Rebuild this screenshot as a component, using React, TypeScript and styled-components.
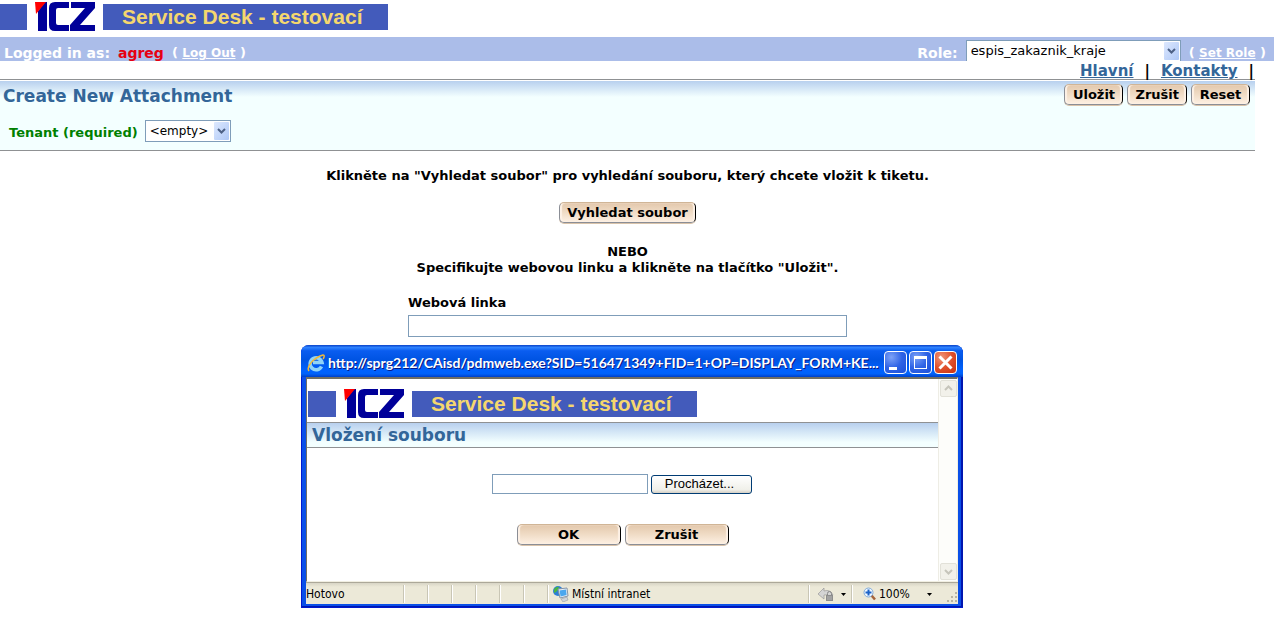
import React from "react";
import styled, { createGlobalStyle } from "styled-components";

const verdana = `"DejaVu Sans", Verdana, sans-serif`;
const tahoma = `"DejaVu Sans Condensed", "DejaVu Sans", Tahoma, sans-serif`;
const arial = `"Liberation Sans", Arial, sans-serif`;
const line = "#8f9193";

const GlobalStyle = createGlobalStyle`
  * { box-sizing: border-box; }
  body {
    margin: 0;
    background: #fff;
    color: #000;
    font: 13px/16px ${verdana};
  }
`;

const Page = styled.div`
  position: relative;
  min-height: 100vh;
`;

const Brand = styled.div`
  display: flex;
  align-items: center;
  gap: 8px;
  height: 30px;
`;

const BrandBlock = styled.div<{ $width: number }>`
  width: ${(p) => p.$width}px;
  height: 26px;
  background: #435bbb;
`;

const BrandTitle = styled.div`
  width: 285px;
  height: 26px;
  padding-left: 19px;
  background: #435bbb;
  color: #f5d76e;
  font: bold 21px/26px ${arial};
  white-space: nowrap;
`;

const TopBrand = styled.header`
  padding: 2px 0 5px;
`;

const LoginBar = styled.div`
  display: flex;
  justify-content: space-between;
  height: 24px;
  padding: 3px 8px 0 4px;
  overflow: hidden;
  background: #abbde9;
  color: #fff;
  font-weight: bold;
  font-size: 14px;
  line-height: 26px;
  white-space: nowrap;
`;

const BarGroup = styled.div`
  display: flex;
  gap: 8px;
`;

const User = styled.span`
  color: #e60012;
`;

const BarAction = styled.span`
  font-size: 13px;
  a {
    color: inherit;
    font-size: 12px;
  }
`;

const SelectBox = styled.span<{ $width: number }>`
  position: relative;
  display: inline-flex;
  width: ${(p) => p.$width}px;
  height: 22px;
  svg {
    position: absolute;
    top: 2px;
    right: 2px;
    pointer-events: none;
  }
`;

const SelectField = styled.select<{ $size: number }>`
  width: 100%;
  height: 22px;
  padding: 0 18px 0 4px;
  border: 1px solid #7f9db9;
  border-radius: 0;
  background: #fff;
  color: #000;
  appearance: none;
  font: ${(p) => p.$size}px/20px ${verdana};
`;

const Content = styled.div`
  margin-right: 19px;
`;

const Menu = styled.nav`
  display: flex;
  justify-content: flex-end;
  gap: 11px;
  height: 19px;
  padding-right: 1px;
  border-bottom: 1px solid ${line};
  font-weight: bold;
  font-size: 15px;
  line-height: 20px;
  a { color: #336699; }
`;

const FormHead = styled.section`
  margin-top: 1px;
  height: 70px;
  padding: 3px 5px 0 3px;
  border-bottom: 1px solid ${line};
  background: #f3ffff linear-gradient(#b8d0ee, #f3ffff) no-repeat 0 0 / 100% 16px;
`;

const HeadRow = styled.div`
  display: flex;
  justify-content: space-between;
`;

const Heading = styled.h1`
  margin: 0;
  color: #336699;
  font-weight: bold;
  font-size: 17px;
  line-height: 24px;
`;

const ButtonRow = styled.div`
  display: flex;
  justify-content: center;
  gap: 4px;
`;

const SkinButton = styled.button<{ $wide?: boolean }>`
  height: 21px;
  min-width: ${(p) => (p.$wide ? 104 : 59)}px;
  padding: 0 7px;
  border: 1px solid #8b8e96;
  border-top-color: #d0b596;
  border-right-color: #000;
  border-radius: 5px;
  background: linear-gradient(#e3c8ac, #f0dcc6 50%, #fdf0e3);
  box-shadow: inset 2px 0 1px #fdf1e6, inset -2px 0 1px #fdf1e6, 0 1px 0 #d9c3aa;
  color: #000;
  font: bold 13px/18px ${verdana};
  white-space: nowrap;
`;

const TenantRow = styled.div`
  display: flex;
  gap: 7px;
  margin-top: 12px;
  padding-left: 6px;
  label {
    color: #008000;
    font-weight: bold;
    line-height: 26px;
  }
`;

const Attach = styled.main`
  display: flex;
  flex-direction: column;
  align-items: center;
  padding-top: 17px;
  font-weight: bold;
  text-align: center;
`;

const Message = styled.p`
  margin: 0;
`;

const SearchRow = styled.div`
  padding: 18px 0 21px;
`;

const LinkField = styled.div`
  display: flex;
  flex-direction: column;
  gap: 4px;
  width: 439px;
  margin-top: 19px;
  text-align: left;
`;

const TextBox = styled.input<{ $width?: number; $height: number }>`
  width: ${(p) => (p.$width ? `${p.$width}px` : "100%")};
  height: ${(p) => p.$height}px;
  padding: 0 4px;
  border: 1px solid #7f9db9;
  background: #fff;
  font: 13px ${verdana};
`;

const Popup = styled.section`
  position: absolute;
  top: 345px;
  left: 301px;
  width: 662px;
  padding: 0 5px 4px;
  border-radius: 8px 8px 0 0;
  background: #0a4fe8;
  box-shadow: inset 1px -1px 0 #0019cf, inset -2px -2px 0 #0016b0;
`;

const TitleBar = styled.div`
  display: flex;
  align-items: center;
  gap: 3px;
  height: 32px;
  margin: 0 -5px;
  padding: 3px 6px 0 6px;
  border-radius: 8px 8px 0 0;
  background: linear-gradient(#0a42c8, #2f83ff 8%, #0a5df0 18%, #0054e3 45%, #0062ff 80%, #0062fa 90%, #0040c8);
`;

const TitleText = styled.h2`
  flex: 1;
  margin: 0;
  overflow: hidden;
  color: #fff;
  font: bold 14px/24px Lato, "Trebuchet MS", sans-serif;
  text-shadow: 1px 1px 0 #0a1883;
  white-space: nowrap;
`;

const CaptionButtons = styled.div`
  display: flex;
  gap: 2px;
`;

const CaptionButton = styled.button<{ $close?: boolean }>`
  display: flex;
  width: 23px;
  height: 23px;
  padding: 0;
  border: 1px solid #fff;
  border-radius: 4px;
  background: ${(p) =>
    p.$close
      ? "radial-gradient(circle at 30% 25%, #ef9579, #e0502c 50%, #c83010)"
      : "radial-gradient(circle at 30% 25%, #7da2f7, #2f63e6 50%, #1c4fd8)"};
`;

const Viewport = styled.div`
  display: flex;
  height: 205px;
  border: 1px solid #f1efe2;
  border-top: 2px solid #716f64;
  border-left: 1px solid #716f64;
  background: #fff;
`;

const PopupPage = styled.div`
  flex: 1;
`;

const PopupBrand = styled.div`
  padding: 10px 0 3px 1px;
`;

const PopupHeading = styled.h3`
  margin: 0;
  height: 26px;
  padding-left: 5px;
  border-top: 1px solid ${line};
  border-bottom: 1px solid ${line};
  background: linear-gradient(#b8d0ee, #f3ffff 80%);
  color: #336699;
  font-weight: bold;
  font-size: 17px;
  line-height: 24px;
`;

const FileRow = styled.div`
  display: flex;
  justify-content: center;
  align-items: center;
  gap: 3px;
  padding: 26px 1px 30px 0;
`;

const BrowseButton = styled.button`
  width: 101px;
  height: 19px;
  padding: 0 4px 0 0;
  border: 1px solid #003c74;
  border-radius: 3px;
  background: linear-gradient(#fff, #f0f0ea 80%, #d6d0c5);
  color: #000;
  font: 13px/16px ${arial};
`;

const ScrollBar = styled.div`
  display: flex;
  flex-direction: column;
  justify-content: space-between;
  width: 19px;
  padding: 1px;
  border-left: 1px solid #eeede5;
  background: #fdfdfa;
`;

const ScrollButton = styled.button`
  display: flex;
  width: 17px;
  height: 17px;
  padding: 0;
  border: 1px solid #e2e1d8;
  border-radius: 2px;
  background: #f2f1ea;
`;

const StatusBar = styled.footer`
  display: flex;
  height: 22px;
  border-top: 1px solid #aca899;
  background: linear-gradient(#d8d5c6, #ece9d8 4px);
  font: 12px/22px ${tahoma};
`;

const StatusCell = styled.div<{ $width?: number; $indent?: number; $gap?: number }>`
  display: flex;
  align-items: center;
  gap: ${(p) => p.$gap ?? 3}px;
  flex: ${(p) => (p.$width ? `0 0 ${p.$width}px` : "1")};
  height: 18px;
  margin-top: 2px;
  padding-left: ${(p) => p.$indent ?? 0}px;
  border-left: 1px solid #fff;
  box-shadow: -1px 0 0 #c9c6b5;
  &:first-child {
    border: 0;
    box-shadow: none;
  }
`;

const GripSlot = styled.div`
  display: flex;
  align-items: flex-end;
  padding-bottom: 1px;
`;

const ZoomValue = styled.span`
  width: 45px;
`;

const SelectArrow = () => (
  <svg width="15" height="18" viewBox="0 0 15 18" aria-hidden="true">
    <defs>
      <linearGradient id="arrowFill" x1="0" y1="0" x2="1" y2="1">
        <stop offset="0" stopColor="#dde8fe" />
        <stop offset="1" stopColor="#aec8f7" />
      </linearGradient>
    </defs>
    <rect width="15" height="18" rx="1" fill="url(#arrowFill)" />
    <path d="M4 7l3.500 3.500L11 7" fill="none" stroke="#4d6185" strokeWidth="2" />
  </svg>
);

const IczLogo = () => (
  <svg width="60" height="30" viewBox="0 0 60 30" role="img" aria-label="ICZ">
    <path d="M10 0h2v29H3V9z" fill="#000099" />
    <path d="M0 0h11L1 12z" fill="#ff0000" />
    <path d="M34 0H20q-6 0-6 6v17q0 6 6 6h14v-6H23q-2 0-2-2V8q0-2 2-2h11z" fill="#000099" />
    <path d="M36 0h24v6L45 23h15v6H35v-6L50 6H36z" fill="#000099" />
  </svg>
);

const BrowserIcon = () => (
  <svg width="18" height="18" viewBox="0 0 18 18" aria-hidden="true">
    <path d="M14.500 12.500A6 6 0 1 1 15 8.500H6" fill="none" stroke="#8fd4f8" strokeWidth="3.500" />
    <path d="M2 17C-1 13 6 4 16 1c2 0 1 3 0 4" fill="none" stroke="#f0b93a" strokeWidth="1.500" />
  </svg>
);

const IntranetIcon = () => (
  <svg width="16" height="16" viewBox="0 0 16 16" aria-hidden="true">
    <circle cx="5" cy="5" r="5" fill="#2d7fd6" />
    <path d="M1 3q3-3 5-2L5 4 3 6 1 7z" fill="#4bb543" />
    <path d="M5 3l9-1 1 8-8 2z" fill="#e8eef5" stroke="#8494a8" />
    <path d="M6.500 4.500l6.500-1 .6 5.600-6 1.500z" fill="#4aa7ee" />
    <path d="M8 13l6-2 1 3-5 2z" fill="#d0d5da" stroke="#8b929b" strokeWidth=".5" />
  </svg>
);

const PrivacyIcon = () => (
  <svg width="16" height="16" viewBox="0 0 16 16" aria-hidden="true">
    <path d="M0 8l6-6v3q6-2 9 4l-4 1q-2-2-5-1v4z" fill="#d4d4d4" stroke="#999" strokeWidth=".7" />
    <path d="M9.500 9V7.500a2 2 0 0 1 4 0V9" fill="none" stroke="#888" />
    <rect x="8" y="9" width="7" height="6" fill="#8d8d8d" />
    <path d="M9 11h5M9 13h5" stroke="#ccc" strokeWidth=".7" />
  </svg>
);

const ZoomIcon = () => (
  <svg width="13" height="14" viewBox="0 0 13 14" aria-hidden="true">
    <path d="M8.500 8.500l3.500 4" stroke="#a5643a" strokeWidth="2.500" />
    <circle cx="5.500" cy="5.500" r="4.500" fill="#eef7ff" stroke="#7fa9d8" />
    <path d="M5.500 2.500v6M2.500 5.500h6" stroke="#1c63c8" strokeWidth="2" />
  </svg>
);

const Caret = () => (
  <svg width="5" height="3" viewBox="0 0 5 3" aria-hidden="true">
    <path d="M0 0h5L2.500 3z" fill="#000" />
  </svg>
);

const Grip = () => (
  <svg width="12" height="12" viewBox="0 0 12 12" aria-hidden="true">
    <path d="M9 1h2v2H9zM5 5h2v2H5zM9 5h2v2H9zM1 9h2v2H1zM5 9h2v2H5zM9 9h2v2H9z" fill="#b8b4a2" />
  </svg>
);

const BrandStrip = ({ blockWidth }: { blockWidth: number }) => (
  <Brand>
    <BrandBlock $width={blockWidth} />
    <IczLogo />
    <BrandTitle>Service Desk - testovací</BrandTitle>
  </Brand>
);

const Chevron = ({ up }: { up?: boolean }) => (
  <svg width="15" height="15" viewBox="0 0 15 15" aria-hidden="true">
    <path d={up ? "M4 9l3.500-3.500L11 9" : "M4 6l3.500 3.500L11 6"} fill="none" stroke="#c6c5bb" strokeWidth="2" />
  </svg>
);

export default function App() {
  return (
    <Page>
      <GlobalStyle />
      <TopBrand>
        <BrandStrip blockWidth={27} />
      </TopBrand>
      <LoginBar>
        <BarGroup>
          <span>Logged in as:</span>
          <User>agreg</User>
          <BarAction>
            ( <a href="#logout">Log Out</a> )
          </BarAction>
        </BarGroup>
        <BarGroup>
          <label htmlFor="role">Role:</label>
          <SelectBox $width={215}>
            <SelectField id="role" $size={13}>
              <option>espis_zakaznik_kraje</option>
            </SelectField>
            <SelectArrow />
          </SelectBox>
          <BarAction>
            ( <a href="#setrole">Set Role</a> )
          </BarAction>
        </BarGroup>
      </LoginBar>
      <Content>
        <Menu>
          <a href="#main">Hlavní</a>
          <span>|</span>
          <a href="#contacts">Kontakty</a>
          <span>|</span>
        </Menu>
        <FormHead>
          <HeadRow>
            <Heading>Create New Attachment</Heading>
            <ButtonRow>
              <SkinButton>Uložit</SkinButton>
              <SkinButton>Zrušit</SkinButton>
              <SkinButton>Reset</SkinButton>
            </ButtonRow>
          </HeadRow>
          <TenantRow>
            <label htmlFor="tenant">Tenant (required)</label>
            <SelectBox $width={86}>
              <SelectField id="tenant" $size={12}>
                <option>&lt;empty&gt;</option>
              </SelectField>
              <SelectArrow />
            </SelectBox>
          </TenantRow>
        </FormHead>
        <Attach>
          <Message>Klikněte na "Vyhledat soubor" pro vyhledání souboru, který chcete vložit k tiketu.</Message>
          <SearchRow>
            <SkinButton>Vyhledat soubor</SkinButton>
          </SearchRow>
          <Message>NEBO</Message>
          <Message>Specifikujte webovou linku a klikněte na tlačítko "Uložit".</Message>
          <LinkField>
            <label htmlFor="weblink">Webová linka</label>
            <TextBox id="weblink" type="text" $height={22} />
          </LinkField>
        </Attach>
      </Content>

      <Popup>
        <TitleBar>
          <BrowserIcon />
          <TitleText>http://sprg212/CAisd/pdmweb.exe?SID=516471349+FID=1+OP=DISPLAY_FORM+KE...</TitleText>
          <CaptionButtons>
            <CaptionButton aria-label="Minimize">
              <svg width="21" height="21" viewBox="0 0 21 21">
                <path d="M4 15h8v3H4z" fill="#fff" />
              </svg>
            </CaptionButton>
            <CaptionButton aria-label="Maximize">
              <svg width="21" height="21" viewBox="0 0 21 21">
                <path d="M4 4h13v13H4zM5 7v9h11V7z" fill="#fff" fillRule="evenodd" />
              </svg>
            </CaptionButton>
            <CaptionButton $close aria-label="Close">
              <svg width="21" height="21" viewBox="0 0 21 21">
                <path d="M4.500 4.500l12 12M16.500 4.500l-12 12" stroke="#fff" strokeWidth="3" />
              </svg>
            </CaptionButton>
          </CaptionButtons>
        </TitleBar>
        <Viewport>
          <PopupPage>
            <PopupBrand>
              <BrandStrip blockWidth={28} />
            </PopupBrand>
            <PopupHeading>Vložení souboru</PopupHeading>
            <FileRow>
              <TextBox type="text" aria-label="Soubor" $width={156} $height={20} />
              <BrowseButton>Procházet...</BrowseButton>
            </FileRow>
            <ButtonRow>
              <SkinButton $wide>OK</SkinButton>
              <SkinButton $wide>Zrušit</SkinButton>
            </ButtonRow>
          </PopupPage>
          <ScrollBar>
            <ScrollButton aria-label="Scroll up">
              <Chevron up />
            </ScrollButton>
            <ScrollButton aria-label="Scroll down">
              <Chevron />
            </ScrollButton>
          </ScrollBar>
        </Viewport>
        <StatusBar>
          <StatusCell $width={98}>Hotovo</StatusCell>
          <StatusCell $width={24} />
          <StatusCell $width={24} />
          <StatusCell $width={24} />
          <StatusCell $width={24} />
          <StatusCell $width={24} />
          <StatusCell $width={24} />
          <StatusCell $indent={4}>
            <IntranetIcon />
            Místní intranet
          </StatusCell>
          <StatusCell $width={43} $indent={8} $gap={7}>
            <PrivacyIcon />
            <Caret />
          </StatusCell>
          <StatusCell $width={94} $indent={10}>
            <ZoomIcon />
            <ZoomValue>100%</ZoomValue>
            <Caret />
          </StatusCell>
          <GripSlot>
            <Grip />
          </GripSlot>
        </StatusBar>
      </Popup>
    </Page>
  );
}
